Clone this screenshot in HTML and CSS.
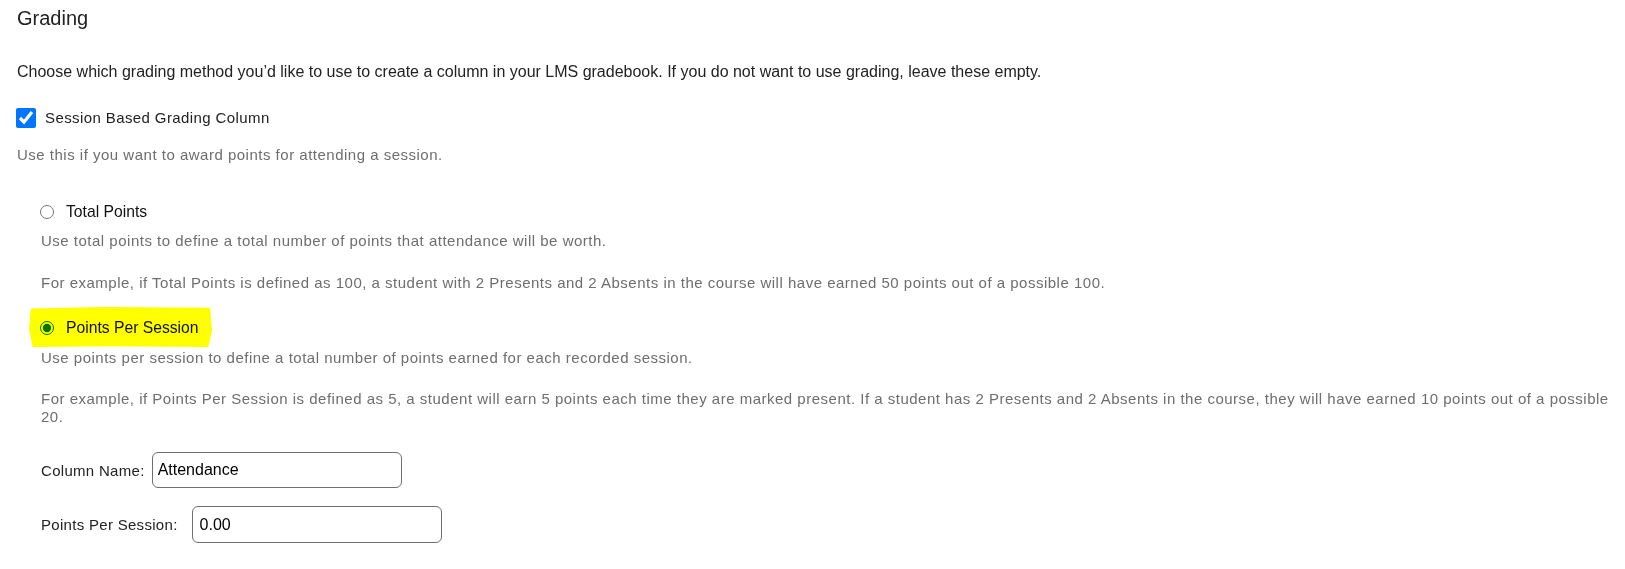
FILE: index.html
```html
<!DOCTYPE html>
<html lang="en">
<head>
    <meta charset="UTF-8">
    <meta name="viewport" content="width=device-width, initial-scale=1.0">
    <title>Grading</title>
    <link rel="stylesheet" href="styles.css">
</head>
<body>
<section class="grading">
    <h2 class="grading-title">Grading</h2>
    <p class="intro">Choose which grading method you’d like to use to create a column in your LMS gradebook. If you do not want to use grading, leave these empty.</p>

    <label class="check-row">
        <input type="checkbox" checked>
        <span>Session Based Grading Column</span>
    </label>
    <p class="hint hint-first">Use this if you want to award points for attending a session.</p>

    <div class="options">
        <div class="option">
            <label class="radio-row">
                <input type="radio" name="method">
                <span>Total Points</span>
            </label>
            <p class="hint hint-first">Use total points to define a total number of points that attendance will be worth.</p>
            <p class="hint">For example, if Total Points is defined as 100, a student with 2 Presents and 2 Absents in the course will have earned 50 points out of a possible 100.</p>
        </div>

        <div class="option">
            <label class="radio-row">
                <span class="marker"></span>
                <input type="radio" name="method" checked>
                <span>Points Per Session</span>
            </label>
            <p class="hint hint-first">Use points per session to define a total number of points earned for each recorded session.</p>
            <p class="hint">For example, if Points Per Session is defined as 5, a student will earn 5 points each time they are marked present. If a student has 2 Presents and 2 Absents in the course, they will have earned 10 points out of a possible 20.</p>
        </div>

        <div class="fields">
            <label class="field field-name">
                <span>Column Name:</span>
                <input type="text" value="Attendance">
            </label>
            <label class="field field-points">
                <span>Points Per Session:</span>
                <input type="text" value="0.00">
            </label>
        </div>
    </div>
</section>
</body>
</html>
```

FILE: styles.css
```css
body {
    margin: 0;
    padding: 6px 8px 0 17px;
    font-family: "Liberation Sans", Arial, sans-serif;
    color: #222;
    background: #fff;
}
.grading-title {
    margin: 0;
    font-size: 20px;
    line-height: 24px;
    font-weight: normal;
}
.intro {
    margin: 32px 0 0;
    font-size: 16px;
    line-height: 20px;
}
.check-row {
    display: flex;
    align-items: center;
    gap: 9px;
    height: 20px;
    margin: 26px 0 0 -1px;
    font-size: 15px;
    letter-spacing: 0.4px;
    line-height: 18px;
}
.check-row input {
    width: 20px;
    height: 20px;
    margin: 0;
    accent-color: #0075ff;
}
.hint {
    margin: 24px 0 0;
    font-size: 15px;
    line-height: 18px;
    letter-spacing: 0.5px;
    color: #6e6e6e;
}
.hint-first {
    margin-top: 10px;
}
.check-row + .hint {
    margin-top: 18px;
}
.options {
    padding-left: 24px;
    margin-top: 38px;
}
.option + .option {
    margin-top: 26px;
}
.radio-row {
    position: relative;
    display: flex;
    align-items: center;
    gap: 12px;
    height: 20px;
    margin-left: -1px;
    font-size: 15.7px;
    color: #111;
}
.radio-row input {
    width: 14px;
    height: 14px;
    margin: 0;
}
.option + .option .hint-first {
    margin-top: 11px;
}
.option + .option .hint + .hint {
    margin-top: 23px;
}
/* yellow marker highlight drawn over the selected option */
.marker {
    position: absolute;
    left: -11px;
    top: -11px;
    width: 183px;
    height: 40px;
    background: #ffff00;
    mix-blend-mode: multiply;
    z-index: 1;
    clip-path: polygon(1% 4%, 40% 0, 99% 2%, 100% 60%, 98% 100%, 45% 98%, 2% 100%, 0 55%);
}
.fields {
    display: flex;
    flex-direction: column;
    gap: 18px;
    margin-top: 26px;
}
.field {
    display: flex;
    align-items: center;
    font-size: 15px;
    letter-spacing: 0.3px;
    color: #222;
}
.field input {
    box-sizing: border-box;
    width: 250px;
    height: 36px;
    padding: 0 5px;
    border: 1px solid #6f6f6f;
    border-radius: 6px;
    font-family: "Liberation Sans", Arial, sans-serif;
    font-size: 16px;
    color: #000;
    background: #fff;
}
.field-name input {
    margin-left: 7px;
}
.field-points input {
    height: 37px;
    margin-left: 14px;
    padding-left: 7px;
}
```
